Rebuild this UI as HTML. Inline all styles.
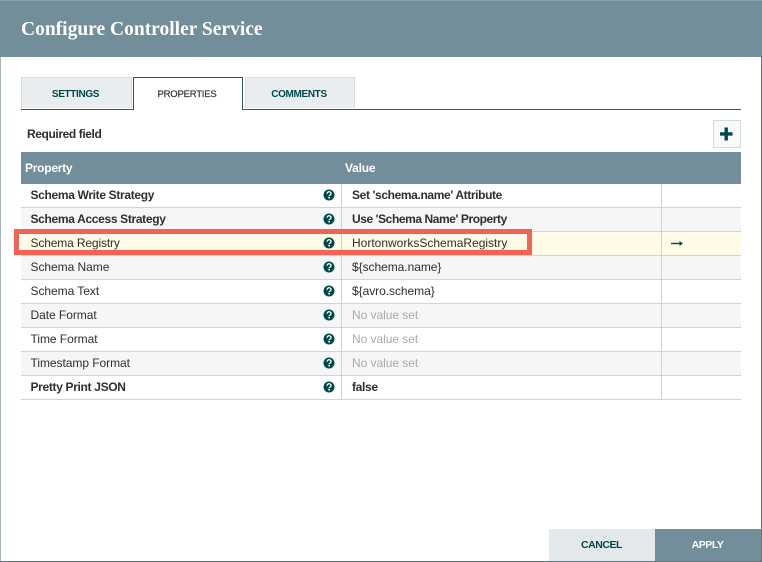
<!DOCTYPE html>
<html lang="en"><head><meta charset="utf-8"><title>Configure Controller Service</title>
<style>
html,body{margin:0;padding:0;background:#fff}
#p{position:relative;width:762px;height:562px;overflow:hidden;background:#fff;font-family:"Liberation Sans",sans-serif;color:#2f2f2f}
#p div,#p svg{position:absolute}
.t{white-space:nowrap;line-height:16px}
.tab{top:77px;height:31px;box-sizing:border-box;padding-right:2px;background:#e9edf0;border:1px solid #d5dfe2;border-bottom:0;color:#004849;font-size:10px;font-weight:bold;text-align:center;line-height:33px;letter-spacing:-.35px}
.row{left:21px;width:720px;height:23px;border-bottom:1px solid #ccd6da}
.v{width:1px;background:#ccd6da}
.n{left:30.5px;font-size:12px;letter-spacing:-.05px}
.val{left:352px;font-size:12px;letter-spacing:-.05px}
b{font-weight:bold;letter-spacing:-.33px}
.g{color:#aaa}
</style></head><body>
<div id="p">
<div style="left:0;top:0;width:1px;height:562px;background:#a6b2b9"></div>
<div style="left:761px;top:0;width:1px;height:562px;background:#66757d"></div>
<div style="left:0;top:0;width:762px;height:57px;background:#728e9b"></div>
<div style="left:0;top:0;width:762px;height:1px;background:#8d9fa9"></div>
<div class="t" style="left:21px;top:19px;color:#fff;font:bold 19.5px/22px 'Liberation Serif',serif">Configure Controller Service</div>

<div class="tab" style="left:21px;width:111px">SETTINGS</div>
<div class="tab" style="left:133px;width:110px;height:33px;background:#fff;border:1px solid #1f5d5f;border-bottom:0;color:#333;font-size:9.5px;font-weight:normal;letter-spacing:-.2px;-webkit-text-stroke:.2px #333;z-index:2">PROPERTIES</div>
<div class="tab" style="left:245px;width:110px">COMMENTS</div>
<div style="left:21px;top:109px;width:720px;height:1px;background:#2f5d66"></div>
<div style="left:134px;top:109px;width:108px;height:1px;background:#fff;z-index:3"></div>

<div class="t" style="left:27px;top:126px;font-size:12px;font-weight:bold;letter-spacing:-.4px">Required field</div>
<div style="left:713px;top:120px;width:28px;height:28px;box-sizing:border-box;background:#f7f9fa;border:1px solid #cfdcdf"></div>
<svg style="left:720px;top:127px" width="13" height="14" viewBox="0 0 13 14"><path d="M4.5 0.5h3.4v4.7h4.6v3.4h-4.6v4.9h-3.4v-4.9h-4.5v-3.4h4.5z" fill="#004849"/></svg>

<div style="left:21px;top:152px;width:720px;height:32px;background:#728e9b"></div>
<div class="t" style="left:25px;top:160px;font-size:12px;font-weight:bold;letter-spacing:-.25px;color:#fff">Property</div>
<div class="t" style="left:345px;top:160px;font-size:12px;font-weight:bold;letter-spacing:-.2px;color:#fff">Value</div>

<div class="row" style="top:184px;background:#fff"></div>
<div class="row" style="top:208px;background:#f4f6f7"></div>
<div class="row" style="top:232px;background:#fffbe6"></div>
<div class="row" style="top:256px;background:#f4f6f7"></div>
<div class="row" style="top:280px;background:#fff"></div>
<div class="row" style="top:304px;background:#f4f6f7"></div>
<div class="row" style="top:328px;background:#fff"></div>
<div class="row" style="top:352px;background:#f4f6f7"></div>
<div class="row" style="top:376px;background:#fff"></div>
<div class="v" style="left:341px;top:184px;height:216px"></div>
<div class="v" style="left:661px;top:184px;height:216px"></div>

<div class="t n" style="top:187px"><b>Schema Write Strategy</b></div>
<div class="t n" style="top:211px"><b>Schema Access Strategy</b></div>
<div class="t n" style="top:235px;letter-spacing:-.14px">Schema Registry</div>
<div class="t n" style="top:259px">Schema Name</div>
<div class="t n" style="top:283px">Schema Text</div>
<div class="t n" style="top:307px">Date Format</div>
<div class="t n" style="top:331px">Time Format</div>
<div class="t n" style="top:355px">Timestamp Format</div>
<div class="t n" style="top:379px"><b>Pretty Print JSON</b></div>

<div class="t val" style="top:187px"><b style="letter-spacing:-.37px">Set 'schema.name' Attribute</b></div>
<div class="t val" style="top:211px"><b style="letter-spacing:-.42px">Use 'Schema Name' Property</b></div>
<div class="t val" style="top:235px;letter-spacing:0">HortonworksSchemaRegistry</div>
<div class="t val" style="top:259px">${schema.name}</div>
<div class="t val" style="top:283px">${avro.schema}</div>
<div class="t val g" style="top:307px">No value set</div>
<div class="t val g" style="top:331px">No value set</div>
<div class="t val g" style="top:355px">No value set</div>
<div class="t val" style="top:379px"><b>false</b></div>

<svg style="left:323px;top:184px" width="12" height="216" viewBox="0 0 12 216">
<defs><g id="q"><circle cx="6" cy="11" r="5.5" fill="#004849"/><path d="M4.1 9.7c0-2.6 4-2.6 4-.1 0 1.4-2 1.4-2 2.7" fill="none" stroke="#fff" stroke-width="1.3"/><rect x="5.3" y="13" width="1.6" height="1.5" fill="#fff"/></g></defs>
<use href="#q"/><use href="#q" y="24"/><use href="#q" y="48"/><use href="#q" y="72"/><use href="#q" y="96"/><use href="#q" y="120"/><use href="#q" y="144"/><use href="#q" y="168"/><use href="#q" y="192"/>
</svg>

<svg style="left:671px;top:240px" width="13" height="7" viewBox="0 0 13 7"><path d="M0 3.5h9" stroke="#004849" stroke-width="1.4"/><path d="M8.5 1l3.5 2.5-3.5 2.5z" fill="#004849"/></svg>

<div style="left:14px;top:229px;width:518px;height:26px;box-sizing:border-box;border:5px solid #f26355;z-index:5"></div>

<div style="left:549px;top:529px;width:106px;height:32px;padding-right:1px;box-sizing:border-box;background:#e3e8eb;color:#004849;font-size:10.5px;font-weight:bold;letter-spacing:-.45px;text-align:center;line-height:32px">CANCEL</div>
<div style="left:655px;top:529px;width:106px;height:32px;padding-right:1px;box-sizing:border-box;background:#728e9b;color:#fff;font-size:10.5px;font-weight:bold;letter-spacing:-.45px;text-align:center;line-height:32px">APPLY</div>
<div style="left:0;top:561px;width:762px;height:1px;background:#66757d"></div>
</div>
</body></html>
